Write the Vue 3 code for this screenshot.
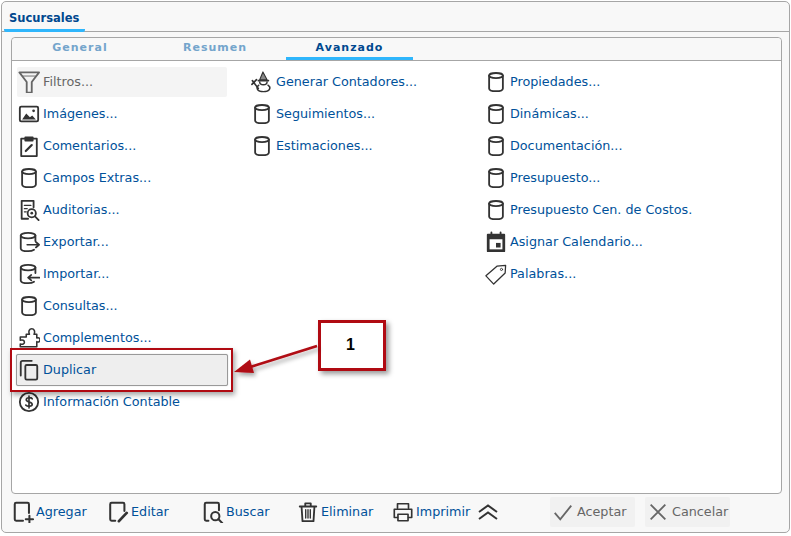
<script setup>
const col1 = [
  { t: 'Filtros...', i: 'filter', muted: true },
  { t: 'Imágenes...', i: 'image' },
  { t: 'Comentarios...', i: 'clip' },
  { t: 'Campos Extras...', i: 'db' },
  { t: 'Auditorias...', i: 'audit' },
  { t: 'Exportar...', i: 'export' },
  { t: 'Importar...', i: 'import' },
  { t: 'Consultas...', i: 'db' },
  { t: 'Complementos...', i: 'puzzle' },
  { t: 'Duplicar', i: 'copy', focus: true },
  { t: 'Información Contable', i: 'dollar' },
]
const col2 = [
  { t: 'Generar Contadores...', i: 'wizard' },
  { t: 'Seguimientos...', i: 'db' },
  { t: 'Estimaciones...', i: 'db' },
]
const col3 = [
  { t: 'Propiedades...', i: 'db' },
  { t: 'Dinámicas...', i: 'db' },
  { t: 'Documentación...', i: 'db' },
  { t: 'Presupuesto...', i: 'db' },
  { t: 'Presupuesto Cen. de Costos.', i: 'db' },
  { t: 'Asignar Calendario...', i: 'cal' },
  { t: 'Palabras...', i: 'tag' },
]
const columns = [col1, col2, col3]
const tools = [
  { t: 'Agregar', i: 'add', w: 95 },
  { t: 'Editar', i: 'edit', w: 95 },
  { t: 'Buscar', i: 'search', w: 95 },
  { t: 'Eliminar', i: 'trash', w: 95 },
  { t: 'Imprimir', i: 'print', w: 86 },
]
</script>

<template>
  <div class="frame">
    <div class="tabbar"><div class="tab">Sucursales</div></div>
    <div class="panel">
      <div class="subtabs">
        <div class="st">General</div>
        <div class="st">Resumen</div>
        <div class="st on">Avanzado</div>
      </div>
      <div class="cols">
        <div v-for="(c, n) in columns" :key="n" class="col">
          <div v-for="r in c" :key="r.t" class="row" :class="{ muted: r.muted, focus: r.focus }">
            <svg class="ic" viewBox="0 0 24 24" fill="none" stroke="#333" stroke-width="2" stroke-linejoin="round" stroke-linecap="round">
              <template v-if="r.i === 'db'">
                <ellipse cx="12" cy="5" rx="7.500" ry="2.800" />
                <path d="M4.500 5V19C4.500 21 8 22 12 22S19.500 21 19.500 19V5" />
              </template>
              <template v-else-if="r.i === 'filter'">
                <path d="M1.500 1.500H23L15 12V23.500H9.500V12Z" stroke="#666" />
                <path d="M5 5.500H19" stroke="#666" stroke-width="1" />
              </template>
              <template v-else-if="r.i === 'image'">
                <rect x="2" y="4" width="20" height="16" rx="1.500" />
                <path d="M4.500 18L9 11.500L13 15.500L15.500 13.500L19.500 18Z" fill="#333" stroke="none" />
                <circle cx="17" cy="8.500" r="1.500" fill="#333" stroke="none" />
              </template>
              <template v-else-if="r.i === 'clip'">
                <path d="M8 4H3.500V23H20.500V4H16" />
                <path d="M8 2.500H16V6H8Z" fill="#333" />
                <path d="M8.500 17.500L15 11" stroke-width="2.400" />
              </template>
              <template v-else-if="r.i === 'audit'">
                <path d="M11 21.500H4V2H17V9" />
                <path d="M7 7H14M7 10.500H10M7 14H9" stroke-width="1.500" />
                <circle cx="15" cy="15.500" r="4.500" />
                <circle cx="15" cy="15.500" r="1.500" fill="#333" stroke="none" />
                <path d="M18.500 19L22.500 23" />
              </template>
              <template v-else-if="r.i === 'export'">
                <ellipse cx="11" cy="5" rx="8" ry="3" />
                <path d="M3 5V19C3 21 6.500 22 11 22C14 22 16 21.500 17.500 20.500M19 5V11" />
                <path d="M10 15H22.500M19.500 12L23 15L19.500 18" stroke-width="1.800" />
              </template>
              <template v-else-if="r.i === 'import'">
                <ellipse cx="11" cy="5" rx="8" ry="3" />
                <path d="M3 5V19C3 21 6.500 22 11 22C14 22 16 21.500 17.500 20.500M19 5V11" />
                <path d="M23.500 16H11M14.500 13L11 16L14.500 19" stroke-width="1.800" />
              </template>
              <template v-else-if="r.i === 'puzzle'">
                <path d="M9 8H12.500C11 4.500 12.500 2 15 2S19 4.500 17.500 8H20.500V12C23 11 24 12.500 24 14S23 17 20.500 16V21.500H2.500V18.500C5 19.500 7 18.500 7 16.500S5 13.500 2.500 14.500V11H9Z" stroke-width="1.700" />
              </template>
              <template v-else-if="r.i === 'copy'">
                <path d="M15 2H5C4 2 3 3 3 4V18" />
                <rect x="8" y="6.500" width="13" height="16" rx="1.500" />
              </template>
              <template v-else-if="r.i === 'dollar'">
                <circle cx="12" cy="12" r="10" />
                <path d="M15.500 8.500C14.500 7 9 6.500 9 9.500C9 12.500 15.500 11.500 15.500 14.500C15.500 17.500 10 17 8.500 15.500M12 5.500V18.500" stroke-width="1.800" />
              </template>
              <template v-else-if="r.i === 'wizard'">
                <path d="M13 1L9.500 9.500H17.500Z" fill="#888" stroke-width="1.200" />
                <path d="M8 10.500H19" stroke-width="1.800" />
                <path d="M9.500 12C9.500 16 17.500 16 17.500 12M8.500 15.500C5 18 6.500 22.500 13.500 22.500S22.500 18 18.500 15.500" stroke-width="1.600" />
                <path d="M1.500 10.500L8 19M1 14.500L6 9.500" stroke-width="1.800" />
              </template>
              <template v-else-if="r.i === 'cal'">
                <path d="M3 4H21V22H3Z" fill="#333" />
                <path d="M7 1.500V5M17 1.500V5" />
                <rect x="5" y="9" width="14" height="11" fill="#fff" stroke="none" />
                <rect x="12" y="13" width="5" height="5" fill="#333" stroke="none" />
              </template>
              <template v-else-if="r.i === 'tag'">
                <path d="M1 14L13 3.500L22.500 2.500L22 11L9.500 23Z" stroke-width="1.400" />
                <circle cx="18" cy="7" r="1.200" stroke-width="1" />
              </template>
            </svg>
            <span class="lbl">{{ r.t }}</span>
          </div>
        </div>
      </div>
    </div>
    <div class="bottom">
      <div class="tools">
        <div v-for="b in tools" :key="b.t" class="tool" :style="{ width: b.w + 'px' }">
          <svg class="ic" viewBox="0 0 24 24" fill="none" stroke="#333" stroke-width="2.200" stroke-linejoin="round" stroke-linecap="round">
            <template v-if="b.i === 'add'">
              <path d="M12 21.500H4.500C3.500 21.500 3 21 3 20V3.500C3 2.500 3.500 2 4.500 2H17C18 2 18.500 2.500 18.500 3.500V13" />
              <path d="M19 16V23.500M15 20H23" />
            </template>
            <template v-else-if="b.i === 'edit'">
              <path d="M9 21.500H5C4 21.500 3.500 21 3.500 20V3.500C3.500 2.500 4 2 5 2H17.500C18.500 2 19 2.500 19 3.500V11" />
              <path d="M13 22L21.500 13" stroke-width="3" />
            </template>
            <template v-else-if="b.i === 'search'">
              <path d="M7 21.500H4.500C3.500 21.500 3 21 3 20V3.500C3 2.500 3.500 2 4.500 2H17C18 2 18.500 2.500 18.500 3.500V10" />
              <circle cx="14.500" cy="16.500" r="4.500" />
              <path d="M18 20L22 24" />
            </template>
            <template v-else-if="b.i === 'trash'">
              <path d="M3 6H21M9 5V2.500H15V5" stroke-width="2" />
              <path d="M5 6.500L6 22H18L19 6.500" stroke-width="2" />
              <path d="M9.500 9.500V18.500M12 9.500V18.500M14.500 9.500V18.500" stroke-width="1.500" />
            </template>
            <template v-else-if="b.i === 'print'">
              <path d="M6 8V3H18V8" stroke-width="1.800" />
              <path d="M6 18H2.500V9H21.500V18H18" stroke-width="1.800" />
              <rect x="6.500" y="14.500" width="11" height="7" stroke-width="1.800" />
            </template>
          </svg>
          <span class="lbl">{{ b.t }}</span>
        </div>
        <svg class="chev" viewBox="0 0 20 16" fill="none" stroke="#333" stroke-width="2">
          <path d="M1 8L10 1.500L19 8M1 15L10 8.500L19 15" />
        </svg>
      </div>
      <div class="actions">
        <div class="act">
          <svg class="ic" viewBox="0 0 24 24" fill="none" stroke="#666" stroke-width="2"><path d="M3 13L9 20L21 5" /></svg>
          <span class="lbl">Aceptar</span>
        </div>
        <div class="act">
          <svg class="ic" viewBox="0 0 24 24" fill="none" stroke="#666" stroke-width="2"><path d="M4 4L20 20M20 4L4 20" /></svg>
          <span class="lbl">Cancelar</span>
        </div>
      </div>
    </div>

    <div class="mark"></div>
    <div class="callout">1</div>
    <svg class="arrow" viewBox="0 0 100 60" width="100" height="60">
      <defs>
        <filter id="sh" x="-20%" y="-20%" width="150%" height="160%"><feDropShadow dx="2" dy="3" stdDeviation="2" flood-color="#000" flood-opacity=".35" /></filter>
      </defs>
      <g filter="url(#sh)">
        <path d="M84 8L14 30" stroke="#b00a12" stroke-width="2.500" />
        <path d="M1 34L17 21.500L21 35Z" fill="#b00a12" />
      </g>
    </svg>
  </div>
</template>

<style>
html, body { margin: 0; background: #fff; }
</style>

<style scoped>
.frame {
  position: relative;
  box-sizing: border-box;
  width: 789px;
  height: 532px;
  margin: 1px 0 0 1px;
  border: 1px solid #a6a6a6;
  border-radius: 5px;
  background: #f8f8f8;
  font-family: "DejaVu Sans", sans-serif;
  font-size: 12.75px;
  overflow: hidden;
}
.tabbar {
  height: 29px;
  border-bottom: 1px solid #a6a6a6;
  padding-left: 2px;
}
.tab {
  box-sizing: border-box;
  width: 81px;
  height: 30px;
  padding: 9px 0 0 5px;
  font-size: 11.5px;
  line-height: 15px;
  font-weight: 700;
  color: #00488f;
  border-bottom: 3px solid #2fb6fc;
  border-radius: 0 0 2px 2px;
}
.panel {
  box-sizing: border-box;
  width: 771px;
  height: 457px;
  margin: 5px 0 0 9px;
  border: 1px solid #a6a6a6;
  border-radius: 4px;
  background: #fff;
}
.subtabs {
  display: grid;
  grid-template-columns: 136px 134px 131px;
  height: 22px;
  border-bottom: 1px solid #a6a6a6;
  background: #f8f8f8;
  border-radius: 4px 4px 0 0;
}
.st {
  box-sizing: border-box;
  height: 22px;
  padding-top: 2px;
  line-height: 15px;
  text-align: center;
  font-size: 11px;
  font-weight: 700;
  letter-spacing: 1px;
  color: #74a5cc;
}
.st.on {
  margin-left: 4px;
  color: #00488f;
  border-bottom: 3px solid #2fb6fc;
}
.cols {
  display: grid;
  grid-template-columns: 233px 234px 233px;
  padding: 6px 0 0 5px;
}
.col { display: flex; flex-direction: column; gap: 2px; }
.row {
  box-sizing: border-box;
  width: 210px;
  height: 30px;
  display: flex;
  align-items: center;
  gap: 3px;
  padding-left: 1px;
  color: #00519a;
  border-radius: 2px;
  white-space: nowrap;
}
.lbl { margin-top: -1px; }
.row.muted { background: #f4f4f4; color: #666; }
.row.focus {
  width: 212px;
  height: 32px;
  margin: -1px 0 -1px -1px;
  background: #eeeeee;
  border: 1px solid #999;
  box-shadow: 0 0 1px #aaa;
}
.ic { width: 22px; height: 22px; flex: none; display: block; }
.bottom {
  display: flex;
  height: 35px;
  align-items: center;
  padding-left: 10px;
}
.tools { display: flex; align-items: center; width: 538px; }
.tool {
  display: flex;
  align-items: center;
  gap: 2px;
  color: #00519a;
  box-sizing: border-box;
}
.chev { width: 20px; height: 16px; flex: none; }
.actions { display: flex; gap: 10px; }
.act {
  box-sizing: border-box;
  width: 85px;
  height: 30px;
  padding: 0 0 0 2px;
  display: flex;
  align-items: center;
  gap: 3px;
  background: #f1f1f1;
  border-radius: 2px;
  color: #666;
  white-space: nowrap;
}
.mark {
  position: absolute;
  left: 8px;
  top: 346px;
  width: 223px;
  height: 44px;
  box-sizing: border-box;
  border: 2px solid #b00a12;
  box-shadow: 2px 3px 5px rgba(0, 0, 0, .35);
}
.callout {
  position: absolute;
  left: 316px;
  top: 318px;
  width: 68px;
  height: 51px;
  box-sizing: border-box;
  border: 3px solid #b00a12;
  background: #fff;
  box-shadow: 3px 3px 5px rgba(0, 0, 0, .4);
  display: flex;
  align-items: center;
  justify-content: center;
  padding: 0 3px 1px 0;
  font-family: "Liberation Sans", sans-serif;
  font-size: 16px;
  font-weight: 700;
  color: #000;
}
.arrow { position: absolute; left: 231px; top: 336px; }
</style>
